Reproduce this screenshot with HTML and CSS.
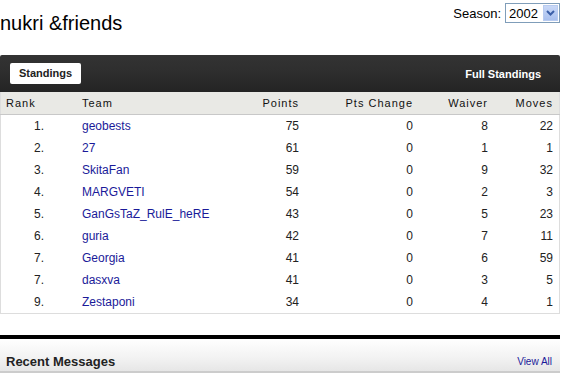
FILE: index.html
```html
<!DOCTYPE html>
<html>
<head lang="en">
    <meta charset="UTF-8">
    <title>nukri &amp;friends</title>
    <link rel="stylesheet" href="styles.css">
</head>
<body>
<div id="page">
    <div class="top">
        <h1>nukri &amp;friends</h1>
        <div class="season">
            <span>Season:</span>
            <div class="select">
                <span class="val">2002</span>
                <span class="arrow">
                    <svg width="11" height="8" viewBox="0 0 11 8"><path d="M2 2 L5.5 5.5 L9 2" fill="none" stroke="#3b5fa8" stroke-width="2"/></svg>
                </span>
            </div>
        </div>
    </div>
    <div class="bar">
        <span class="tab">Standings</span>
        <a class="full" href="#">Full Standings</a>
    </div>
    <table class="standings">
        <thead>
        <tr>
            <th class="rank">Rank</th>
            <th class="team">Team</th>
            <th class="num pts">Points</th>
            <th class="num chg">Pts Change</th>
            <th class="num waiver">Waiver</th>
            <th class="num moves">Moves</th>
        </tr>
        </thead>
        <tbody>
        <tr><td class="rank">1.</td><td class="team"><a href="#">geobests</a></td><td class="num">75</td><td class="num">0</td><td class="num">8</td><td class="num">22</td></tr>
        <tr><td class="rank">2.</td><td class="team"><a href="#">27</a></td><td class="num">61</td><td class="num">0</td><td class="num">1</td><td class="num">1</td></tr>
        <tr><td class="rank">3.</td><td class="team"><a href="#">SkitaFan</a></td><td class="num">59</td><td class="num">0</td><td class="num">9</td><td class="num">32</td></tr>
        <tr><td class="rank">4.</td><td class="team"><a href="#">MARGVETI</a></td><td class="num">54</td><td class="num">0</td><td class="num">2</td><td class="num">3</td></tr>
        <tr><td class="rank">5.</td><td class="team"><a href="#">GanGsTaZ_RulE_heRE</a></td><td class="num">43</td><td class="num">0</td><td class="num">5</td><td class="num">23</td></tr>
        <tr><td class="rank">6.</td><td class="team"><a href="#">guria</a></td><td class="num">42</td><td class="num">0</td><td class="num">7</td><td class="num">11</td></tr>
        <tr><td class="rank">7.</td><td class="team"><a href="#">Georgia</a></td><td class="num">41</td><td class="num">0</td><td class="num">6</td><td class="num">59</td></tr>
        <tr><td class="rank">7.</td><td class="team"><a href="#">dasxva</a></td><td class="num">41</td><td class="num">0</td><td class="num">3</td><td class="num">5</td></tr>
        <tr><td class="rank">9.</td><td class="team"><a href="#">Zestaponi</a></td><td class="num">34</td><td class="num">0</td><td class="num">4</td><td class="num">1</td></tr>
        </tbody>
    </table>
    <div class="messages">
        <h2>Recent Messages</h2>
        <a href="#">View All</a>
    </div>
</div>
</body>
</html>
```

FILE: styles.css
```css
*{
    margin: 0;
    padding: 0;
}
body{
    background: #fff;
    font-family: "Liberation Sans", Arial, sans-serif;
    color: #000;
}
a{
    color: #1a1a99;
    text-decoration: none;
}
#page{
    width: 560px;
}
.top{
    display: flex;
    justify-content: space-between;
    align-items: flex-start;
    height: 55px;
}
.top h1{
    font-size: 20px;
    font-weight: normal;
    margin-top: 11px;
    line-height: 24px;
}
.season{
    display: flex;
    align-items: center;
    gap: 4px;
    margin-top: 3px;
    font-size: 13px;
}
.select{
    display: flex;
    align-items: center;
    height: 18px;
    border: 1px solid #7f9db9;
    padding-left: 3px;
}
.select .val{
    width: 33px;
    font-size: 13px;
}
.select .arrow{
    display: flex;
    align-items: center;
    justify-content: center;
    width: 15px;
    height: 16px;
    margin: 1px;
    background: linear-gradient(#c9d8f7, #a9c0ee);
    border: 1px solid #b8cbf0;
    box-sizing: border-box;
}
.bar{
    display: flex;
    justify-content: space-between;
    align-items: center;
    height: 37px;
    padding: 0 19px 0 10px;
    background: linear-gradient(#333 0%, #2e2e2e 45%, #242424 100%);
    border-radius: 2px 2px 0 0;
}
.bar .tab{
    background: #fff;
    border-radius: 2px;
    font-size: 11px;
    font-weight: bold;
    color: #222;
    padding: 4px 9px 5px;
}
.bar .full{
    color: #fff;
    font-size: 11px;
    font-weight: bold;
}
.standings{
    width: 560px;
    border-collapse: collapse;
    border-left: 1px solid #ddd;
    border-right: 1px solid #ddd;
    border-bottom: 1px solid #ddd;
    font-size: 12px;
}
.standings th{
    background: #e9e9e5;
    font-weight: normal;
    font-size: 11px;
    letter-spacing: 1px;
    height: 22px;
    text-align: left;
    border-bottom: 1px solid #c8c8c8;
    color: #111;
}
.standings td{
    height: 22px;
    color: #222;
}
.standings .rank{
    padding-left: 5px;
    width: 38px;
}
.standings td.rank{
    text-align: right;
    padding-left: 0;
    width: 43px;
}
.standings .team{
    padding-left: 38px;
    width: 160px;
}
.standings .num{
    text-align: right;
}
.standings td:nth-child(3), .standings th:nth-child(3){
    width: 57px;
}
.standings td:nth-child(4), .standings th:nth-child(4){
    width: 114px;
}
.standings td:nth-child(5), .standings th:nth-child(5){
    width: 75px;
}
.standings td:nth-child(6), .standings th:nth-child(6){
    padding-right: 6px;
}
.messages{
    display: flex;
    justify-content: space-between;
    align-items: center;
    margin-top: 21px;
    height: 38px;
    padding: 12px 8px 0 6px;
    box-sizing: border-box;
    border-top: 4px solid #000;
    border-bottom: 2px solid #ccc;
    background: linear-gradient(#fff, #f2f2f2 60%, #e6e6e6);
}
.messages h2{
    font-size: 13px;
    font-weight: bold;
    color: #222;
}
.messages a{
    font-size: 10px;
    margin-top: 1px;
}
```
